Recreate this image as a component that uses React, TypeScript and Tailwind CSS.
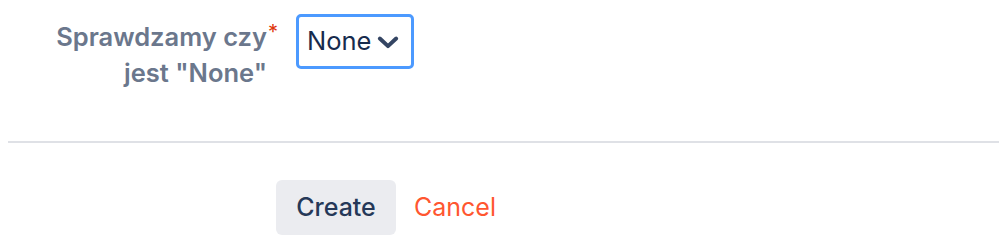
import React from 'react';

export default function App() {
    return (
        <div className="w-[999px] h-[247px] bg-white font-['Inter',sans-serif] overflow-hidden">
            {/* Field row */}
            <div className="flex items-start pt-[14px]">
                <label className="w-[278px] shrink-0 text-right text-[25.5px] leading-[36px] font-semibold text-[#6b778c] pt-[5px] pr-[11px]">
                    Sprawdzamy czy<span className="text-[#de350b] text-[20px] align-top relative top-[-5px] ml-[1px] mr-[-11px] font-normal">*</span>
                    <br />
                    jest "None"
                </label>

                <button className="ml-[18px] h-[55px] flex items-center gap-[3px] pl-[8px] pr-[9px] border-[3px] border-[#4c9aff] rounded-[5px] bg-white text-[#172b4d] text-[25.5px]">
                    None
                    <svg className="w-[28px] h-[28px] text-[#344563]" viewBox="0 0 24 24" fill="none" stroke="currentColor" strokeWidth={3.4} strokeLinecap="round" strokeLinejoin="round">
                        <path d="M5 9l7 6.5 7-6.5" />
                    </svg>
                </button>
            </div>

            {/* Divider */}
            <div className="ml-[8px] mt-[50px] h-[2px] bg-[#dfe1e6]" />

            {/* Actions */}
            <div className="flex items-center gap-[18px] pl-[276px] mt-[37px]">
                <button className="w-[120px] h-[55px] rounded-[6px] bg-[#ebecf0] text-[#253858] text-[25px] font-medium">
                    Create
                </button>
                <button className="text-[#ff5630] text-[25px] font-normal">
                    Cancel
                </button>
            </div>
        </div>
    );
}
